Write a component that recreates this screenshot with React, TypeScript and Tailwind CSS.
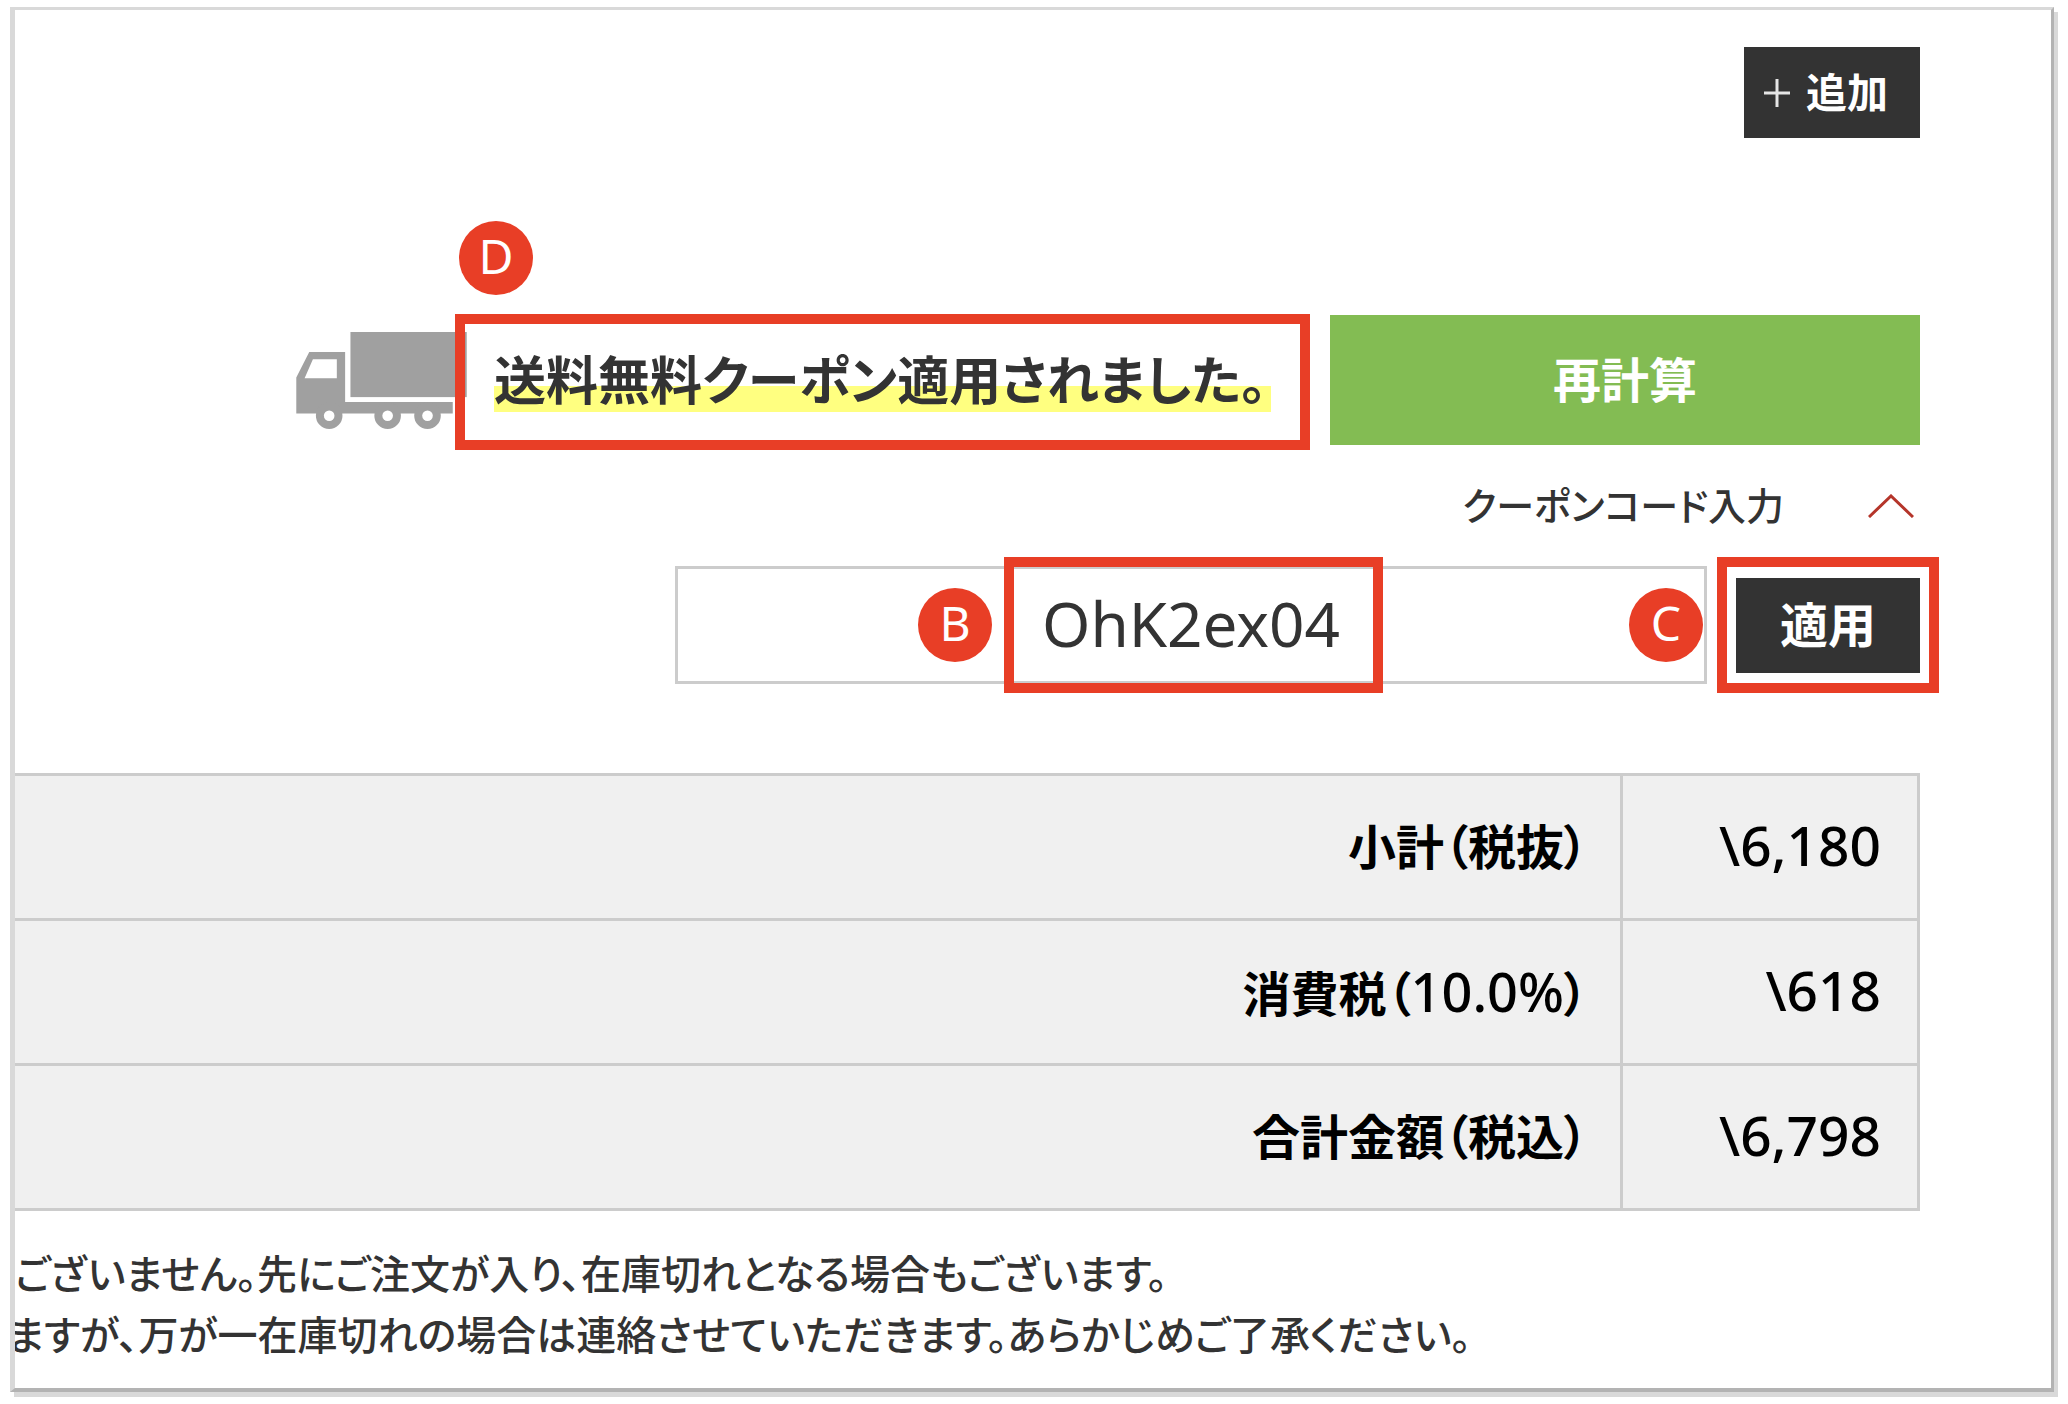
import { useState, type ReactNode } from "react";

interface TotalRow {
  label: string;
  rate?: string;
  amount: string;
}

const totals: TotalRow[] = [
  { label: "小計（税抜）", amount: "\\6,180" },
  { label: "消費税", rate: "10.0%", amount: "\\618" },
  { label: "合計金額（税込）", amount: "\\6,798" },
];

// Red frame with a lettered badge, placed over the element it points at
function Callout({ letter, className, badgeClassName }: { letter: string; className: string; badgeClassName: string }) {
  return (
    <div className={`pointer-events-none absolute border-10 border-[#e83e26] ${className}`}>
      <span
        className={`absolute flex size-[74px] items-center justify-center rounded-full bg-[#e83e26] pb-1 text-[48px] leading-none text-white ${badgeClassName}`}
      >
        {letter}
      </span>
    </div>
  );
}

function DarkButton({ children, className }: { children: ReactNode; className: string }) {
  return (
    <button type="button" className={`flex shrink-0 cursor-pointer items-center justify-center bg-[#333333] font-bold text-white ${className}`}>
      {children}
    </button>
  );
}

function TruckIcon() {
  return (
    <svg viewBox="0 0 513 292" className="h-[97px] w-[171px] shrink-0" fill="#a0a0a0" aria-hidden="true">
      <rect x="163" y="0" width="350" height="196" />
      <path fillRule="evenodd" d="M39 60H147V211H471V245H0V137ZM50 82L25 139H122V82Z" />
      {[99, 275, 395].map((cx) => (
        <g key={cx}>
          <circle cx={cx} cy="252" r="40" />
          <circle cx={cx} cy="252" r="16" fill="#fff" />
        </g>
      ))}
    </svg>
  );
}

export default function App() {
  const [code, setCode] = useState("OhK2ex04");

  return (
    <div className="flex min-h-screen bg-white pt-[7px] pr-[14px] pb-3 pl-[10px] font-['Noto_Sans','Noto_Sans_CJK_JP',sans-serif] text-[#333333] [font-feature-settings:'palt']">
      <main className="min-w-0 flex-1 overflow-hidden border-t-3 border-r-3 border-b-4 border-l-5 border-t-[#d9d9d9] border-r-[#b3b3b3] border-b-[#b3b3b3] border-l-[#d9d9d9] shadow-[4px_5px_0_#d9d9d9]">
        <div className="pt-[37px] pr-[131px]">
          <div className="flex justify-end">
            <DarkButton className="h-[91px] w-[176px] gap-4 pr-3 text-[41px]">
              <svg viewBox="0 0 26 28" className="h-7 w-[26px]" stroke="#e6e6e6" strokeWidth="3" aria-hidden="true">
                <path d="M0 14H26M13 0V28" />
              </svg>
              追加
            </DarkButton>
          </div>

          {/* クーポン適用メッセージ */}
          <div className="mt-[177px] flex items-center justify-end">
            <TruckIcon />
            <div className="relative ml-[27px] flex h-[130px] items-center">
              <p className="bg-[linear-gradient(transparent_38px,#ffff80_38px)] pr-1 text-[52px] leading-[64px] font-bold whitespace-nowrap">
                送料無料クーポン適用されました。
              </p>
              <Callout letter="D" className="-top-px -right-[39px] -bottom-[5px] -left-[39px]" badgeClassName="-top-[103px] -left-[6px]" />
            </div>
            <button type="button" className="ml-[59px] h-[130px] w-[590px] shrink-0 cursor-pointer bg-[#83bc53] text-[48px] font-bold text-white">
              再計算
            </button>
          </div>

          <div className="flex justify-end">
            <button type="button" className="flex h-[121px] cursor-pointer items-center gap-[84px] pr-[6px] text-[38px] font-medium">
              クーポンコード入力
              <svg viewBox="0 0 46 24" className="h-6 w-[46px]" fill="none" stroke="#b5352a" strokeWidth="3" aria-hidden="true">
                <path d="M1 23L23 2L45 23" />
              </svg>
            </button>
          </div>

          <form className="flex items-center justify-end gap-[29px]" onSubmit={(e) => e.preventDefault()}>
            <div className="relative w-[1032px]">
              <input
                type="text"
                aria-label="クーポンコード"
                value={code}
                onChange={(e) => setCode(e.target.value)}
                className="block h-[118px] w-full border-3 border-[#cccccc] pb-1 text-center text-[62px] outline-none"
              />
              <Callout letter="B" className="-top-[9px] -bottom-[9px] left-[329px] w-[379px]" badgeClassName="top-[21px] -left-[96px]" />
            </div>
            <div className="relative">
              <DarkButton className="h-[95px] w-[184px] text-[48px]">適用</DarkButton>
              <Callout letter="C" className="-inset-x-[19px] -top-[21px] -bottom-[20px]" badgeClassName="top-[21px] -left-[98px]" />
            </div>
          </form>

          {/* 合計 */}
          <table className="mt-[89px] w-full border-collapse bg-[#f0f0f0] text-black">
            <tbody>
              {totals.map((row) => (
                <tr key={row.label} className="h-[145px] border-y-3 border-[#cccccc]">
                  <th scope="row" className="pr-8 text-right text-[48px] leading-[60px] font-bold">
                    {row.label}
                    {row.rate && (
                      <>
                        （<span className="text-[54px] font-medium">{row.rate}</span>）
                      </>
                    )}
                  </th>
                  <td className="w-[297px] border-x-3 border-[#cccccc] pr-9 pb-1 text-right text-[55px] leading-[60px] font-medium">{row.amount}</td>
                </tr>
              ))}
            </tbody>
          </table>
        </div>

        <div className="mt-8 text-[40px] leading-[61px] font-medium whitespace-nowrap">
          <p>ございません。先にご注文が入り、在庫切れとなる場合もございます。</p>
          <p className="-ml-2">ますが、万が一在庫切れの場合は連絡させていただきます。あらかじめご了承ください。</p>
        </div>
      </main>
    </div>
  );
}
